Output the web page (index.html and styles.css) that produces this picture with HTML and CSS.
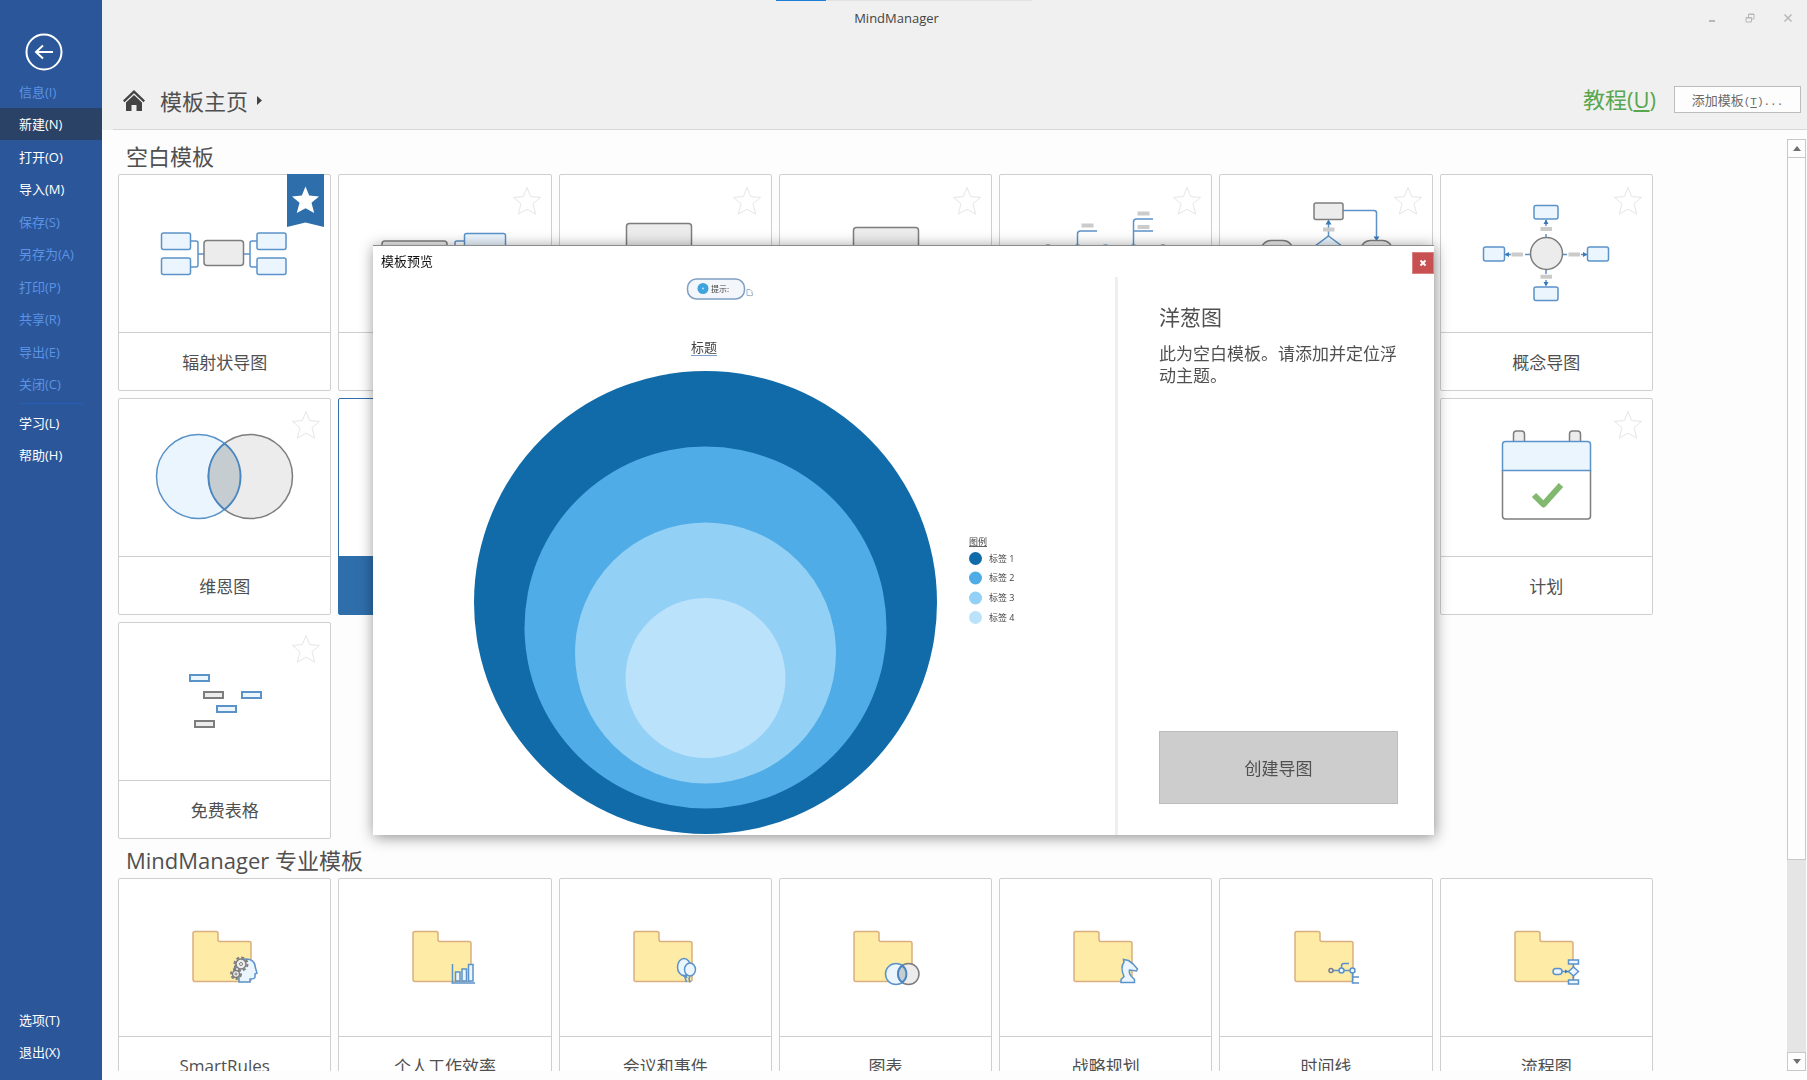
FILE: index.html
```html
<!DOCTYPE html>
<html lang="zh-CN">
<head>
<meta charset="utf-8">
<title>MindManager</title>
<link rel="stylesheet" href="styles.css">
</head>
<body>
<svg class="defs" aria-hidden="true">
  <symbol id="star" viewBox="0 0 30 30"><path d="M15 1.500l3.700 9.100 9.800.8-7.500 6.300 2.700 10.400-8.700-4.900-8.700 4.900 2.700-10.400-7.500-6.300 9.800-.8z"/></symbol>
  <symbol id="folder" viewBox="0 0 213 158"><path class="folder" d="M77 53.500h21q2 0 2 2v6q0 2 2 2h29q2 0 2 2v36q0 2-2 2H77q-2 0-2-2v-46q0-2 2-2z"/></symbol>
</svg>

<div class="app">
  <aside class="sidebar">
    <button class="back" aria-label="返回">
      <svg width="38" height="38" viewBox="0 0 38 38"><circle cx="19" cy="19" r="17.500"/><path d="M28 19H11M18 12.500L11 19l7 6.500"/></svg>
    </button>
    <nav class="menu menu-main">
      <a class="off" href="#">信息(I)</a>
      <a class="current" href="#">新建(N)</a>
      <a href="#">打开(O)</a>
      <a href="#">导入(M)</a>
      <a class="off" href="#">保存(S)</a>
      <a class="off" href="#">另存为(A)</a>
      <a class="off" href="#">打印(P)</a>
      <a class="off" href="#">共享(R)</a>
      <a class="off" href="#">导出(E)</a>
      <a class="off" href="#">关闭(C)</a>
    </nav>
    <hr class="rule">
    <nav class="menu menu-pair">
      <a href="#">学习(L)</a>
      <a href="#">帮助(H)</a>
    </nav>
    <nav class="menu menu-pair menu-end">
      <a href="#">选项(T)</a>
      <a href="#">退出(X)</a>
    </nav>
  </aside>

  <div class="main">
    <header class="header">
      <div class="progress-row"><div class="progress"><span class="progress-bar"></span></div></div>
      <div class="titlebar">
        <span class="app-name">MindManager</span>
        <div class="window-buttons">
          <button aria-label="最小化"><svg width="10" height="10" viewBox="0 0 10 10"><path d="M2 8h6" stroke-width="2"/></svg></button>
          <button aria-label="还原"><svg width="10" height="10" viewBox="0 0 10 10"><path d="M1 4.500h5.500v4.500H1zM1 5h5.500M3.500 4V1H9v5H7M3.500 1.500H9"/></svg></button>
          <button aria-label="关闭"><svg width="10" height="10" viewBox="0 0 10 10"><path d="M1.500 1.500l7 7M8.500 1.500l-7 7" stroke-width="1.500"/></svg></button>
        </div>
      </div>
      <div class="toolbar">
        <svg class="home" width="22" height="22" viewBox="0 0 22 22"><path d="M11 0l11 10.500-1.500 1.800L11 3.300l-9.500 9L0 10.500z"/><path d="M11 5l8 7.500V21h-5.500v-6h-5v6H3v-8.500z"/></svg>
        <a class="crumb" href="#">模板主页</a>
        <svg class="crumb-arrow" width="5" height="9" viewBox="0 0 5 9"><path d="M0 0l5 4.500L0 9z"/></svg>
        <div class="actions">
          <a class="tutorial" href="#">教程(<u>U</u>)</a>
          <button class="add-template">添加模板<span class="mono">(<u>T</u>)...</span></button>
        </div>
      </div>
    </header>

    <div class="content">
      <div class="gallery">
        <h2>空白模板</h2>
        <div class="grid">
          <article class="card">
            <div class="art"><svg width="213" height="158" viewBox="0 0 213 158">
              <path class="link" d="M73 67h5q2 0 2 2v22q0 2-2 2h-5M80 80h6M139 67h-5q-2 0-2 2v22q0 2 2 2h5M132 80h-7"/>
              <g class="b"><rect x="43.500" y="59" width="29" height="16.500" rx="2"/><rect x="43.500" y="84" width="29" height="16.500" rx="2"/><rect x="139" y="59" width="29" height="16.500" rx="2"/><rect x="139" y="84" width="29" height="16.500" rx="2"/></g>
              <rect class="g" x="86" y="66.500" width="39.500" height="25" rx="3"/></svg></div>
            <button class="fav pinned" aria-label="取消收藏"><svg width="37" height="53" viewBox="0 0 37 53"><path class="ribbon" d="M0 0h37v53l-18.500-4.500L0 53z"/><use href="#star" x="3.500" y="11" width="30" height="30"/></svg></button>
            <div class="label">辐射状导图</div>
          </article>
          <article class="card">
            <div class="art"><svg width="213" height="158" viewBox="0 0 213 158">
              <path class="link" d="M126 67h-7q-2 0-2 2v22q0 2 2 2h7M117 80h-8"/>
              <rect class="g" x="44" y="67" width="65" height="25" rx="3"/><rect class="b" x="126.500" y="59.500" width="41" height="17" rx="2"/></svg></div>
            <button class="fav" aria-label="收藏"><svg width="30" height="30"><use href="#star"/></svg></button>
            <div class="label"></div>
          </article>
          <article class="card">
            <div class="art"><svg width="213" height="158" viewBox="0 0 213 158"><rect class="g" x="67.500" y="49.500" width="65" height="26" rx="3"/></svg></div>
            <button class="fav" aria-label="收藏"><svg width="30" height="30"><use href="#star"/></svg></button>
            <div class="label"></div>
          </article>
          <article class="card">
            <div class="art"><svg width="213" height="158" viewBox="0 0 213 158"><rect class="g" x="74.500" y="53.500" width="65" height="26" rx="3"/></svg></div>
            <button class="fav" aria-label="收藏"><svg width="30" height="30"><use href="#star"/></svg></button>
            <div class="label"></div>
          </article>
          <article class="card">
            <div class="art"><svg width="213" height="158" viewBox="0 0 213 158">
              <path class="link" d="M78.500 72V60q0-3 3-3H98M134.500 72V48q0-3 3-3H154M134.500 57H154"/>
              <path class="tag" d="M82.500 51.500h12M138.500 39.500h12M138.500 53h12"/>
              <g class="b"><circle cx="78.500" cy="76" r="5"/><circle cx="106.500" cy="76" r="5"/><circle cx="134.500" cy="76" r="5"/></g><g class="g"><circle cx="49" cy="76" r="5"/><circle cx="164" cy="76" r="5"/></g></svg></div>
            <button class="fav" aria-label="收藏"><svg width="30" height="30"><use href="#star"/></svg></button>
            <div class="label"></div>
          </article>
          <article class="card">
            <div class="art"><svg width="213" height="158" viewBox="0 0 213 158">
              <path class="link" d="M123 36.500h31q2.500 0 2.500 2.500v24M108.500 63V49"/>
              <path class="tip" d="M105.500 50.500l3-5 3 5zM153.500 62.500l3 4.500 3-4.500z"/>
              <path class="tag" d="M103 55.500h11.500"/>
              <rect class="g" x="94" y="29" width="29" height="16.500" rx="2"/>
              <path class="b" d="M108.500 62l16 12-16 12-16-12z"/>
              <rect class="g" x="41" y="66.500" width="32" height="20" rx="10"/><rect class="g" x="140.500" y="66.500" width="32" height="20" rx="10"/></svg></div>
            <button class="fav" aria-label="收藏"><svg width="30" height="30"><use href="#star"/></svg></button>
            <div class="label"></div>
          </article>
          <article class="card">
            <div class="art"><svg width="213" height="158" viewBox="0 0 213 158">
              <path class="link" d="M106 64v-4M106 52v-6M106 96v4M106 106v5M90 80.500h-5M71 80.500h-6M122 80.500h5M141 80.500h6"/>
              <path class="tip" d="M103.500 50l2.500-4.500 2.500 4.500zM103.500 108l2.500 4.500 2.500-4.500zM69 78v5l-4.500-2.500zM143 78v5l4.500-2.500z"/>
              <path class="tag" d="M100.500 55h11.500M100.500 102.700h11.500M71.500 80.500H83M128.500 80.500H140"/>
              <g class="b"><rect x="94" y="31.500" width="24" height="13.500" rx="2"/><rect x="94" y="113" width="24" height="13.500" rx="2"/><rect x="43.500" y="73" width="21" height="14" rx="2"/><rect x="147.500" y="73" width="21" height="14" rx="2"/></g>
              <circle class="g" cx="106.500" cy="79.500" r="16"/></svg></div>
            <button class="fav" aria-label="收藏"><svg width="30" height="30"><use href="#star"/></svg></button>
            <div class="label">概念导图</div>
          </article>

          <article class="card">
            <div class="art"><svg width="213" height="158" viewBox="0 0 213 158">
              <circle class="b" cx="80.500" cy="78.500" r="42"/><circle class="g" cx="132.500" cy="78.500" r="42"/>
              <path class="overlap" d="M106.500 45.500a42 42 0 0 1 0 66a42 42 0 0 1 0-66z"/></svg></div>
            <button class="fav" aria-label="收藏"><svg width="30" height="30"><use href="#star"/></svg></button>
            <div class="label">维恩图</div>
          </article>
          <article class="card selected">
            <div class="art"></div>
            <div class="label">洋葱图</div>
          </article>
          <article class="card last-column">
            <div class="art"><svg width="213" height="158" viewBox="0 0 213 158">
              <path class="g" d="M73.500 43v-7q0-3 3-3h5q3 0 3 3v7M129.500 43v-7q0-3 3-3h5q3 0 3 3v7"/>
              <path class="page" d="M62.500 72v46q0 3 3 3h82q3 0 3-3V72"/>
              <path class="b" d="M62.500 72.500v-26q0-3 3-3h82q3 0 3 3v26z"/>
              <path class="check" d="M94 97l9.500 9.500L121 87"/></svg></div>
            <button class="fav" aria-label="收藏"><svg width="30" height="30"><use href="#star"/></svg></button>
            <div class="label">计划</div>
          </article>

          <article class="card">
            <div class="art"><svg width="213" height="158" viewBox="0 0 213 158">
              <g class="b bold"><rect x="72" y="53" width="19" height="6"/><rect x="124" y="70" width="19" height="6"/><rect x="99" y="84" width="19" height="6"/></g>
              <g class="g bold"><rect x="86" y="70" width="19" height="6"/><rect x="77" y="99" width="19" height="6"/></g></svg></div>
            <button class="fav" aria-label="收藏"><svg width="30" height="30"><use href="#star"/></svg></button>
            <div class="label">免费表格</div>
          </article>
        </div>

        <h2>MindManager 专业模板</h2>
        <div class="grid">
          <article class="card">
            <div class="art"><svg width="213" height="158" viewBox="0 0 213 158"><use href="#folder"/>
              <path class="b" d="M121 104v-6l-5-6q2-11 12-11 9 0 9.500 9l1.500 5-2 1v3q0 2-5 2v3z"/>
              <circle class="gear" cx="123" cy="86" r="6.500"/><circle class="g" cx="123" cy="86" r="5"/><circle class="hub" cx="123" cy="86" r="1.500"/>
              <circle class="gear" cx="118" cy="96" r="5"/><circle class="g" cx="118" cy="96" r="3.500"/><circle class="hub" cx="118" cy="96" r="1"/></svg></div>
            <div class="label">SmartRules</div>
          </article>
          <article class="card">
            <div class="art"><svg width="213" height="158" viewBox="0 0 213 158"><use href="#folder"/>
              <path class="link" d="M114.500 86v19M113.500 105H137"/>
              <g class="b"><rect x="117.500" y="94" width="4.500" height="9"/><rect x="124" y="91" width="4.500" height="12"/><rect x="130.500" y="86.500" width="4.500" height="16.500"/></g></svg></div>
            <div class="label">个人工作效率</div>
          </article>
          <article class="card">
            <div class="art"><svg width="213" height="158" viewBox="0 0 213 158"><use href="#folder"/>
              <ellipse class="b" cx="125" cy="89" rx="6.500" ry="8.500"/><ellipse class="b" cx="131" cy="91.500" rx="5.500" ry="6.500"/>
              <path class="link" d="M125.500 98l2 6M131 98.500l-1 2 1 4M124 98h3l1 2"/></svg></div>
            <div class="label">会议和事件</div>
          </article>
          <article class="card">
            <div class="art"><svg width="213" height="158" viewBox="0 0 213 158"><use href="#folder"/>
              <circle class="b" cx="117" cy="96" r="10.500"/><circle class="g" cx="129.500" cy="96" r="10.500"/>
              <path class="overlap" d="M123.200 87.600a10.500 10.500 0 0 1 0 16.800a10.500 10.500 0 0 1 0-16.800z"/></svg></div>
            <div class="label">图表</div>
          </article>
          <article class="card">
            <div class="art"><svg width="213" height="158" viewBox="0 0 213 158"><use href="#folder"/>
              <path class="b" d="M122 104.500v-3l3-3q-4-9 0-14.500l-.5-2.500 5 1q5 3 9 8.500l-1 2-7-1q-1 4 3 7.500l2 2v3z"/></svg></div>
            <div class="label">战略规划</div>
          </article>
          <article class="card">
            <div class="art"><svg width="213" height="158" viewBox="0 0 213 158"><use href="#folder"/>
              <path class="link" d="M111 92.500h21.500M121.500 92.500V88q0-2.500 2.500-2.500h5M132.500 92.500V105h6.500M132.500 99h6.500"/>
              <circle class="g" cx="111" cy="92.500" r="2"/><circle class="b" cx="121.500" cy="92.500" r="2.500"/><circle class="b" cx="132.500" cy="92.500" r="2.500"/></svg></div>
            <div class="label">时间线</div>
          </article>
          <article class="card">
            <div class="art"><svg width="213" height="158" viewBox="0 0 213 158"><use href="#folder"/>
              <path class="link" d="M122 93.500h7M133.500 86v16"/>
              <path class="tip" d="M125 91.500v4l3.500-2z"/>
              <g class="b"><rect x="113" y="90.500" width="9" height="6" rx="3"/><path d="M133.500 89l5 4.500-5 4.500-5-4.500z"/><rect x="128.500" y="82" width="10" height="4"/><rect x="128.500" y="102" width="10" height="4"/></g></svg></div>
            <div class="label">流程图</div>
          </article>
        </div>
      </div>

      <div class="scrollbar">
        <button aria-label="向上滚动"><svg width="8" height="5" viewBox="0 0 8 5"><path d="M0 5l4-5 4 5z"/></svg></button>
        <div class="track"><div class="thumb"></div></div>
        <button aria-label="向下滚动"><svg width="8" height="5" viewBox="0 0 8 5"><path d="M0 0l4 5 4-5z"/></svg></button>
      </div>
    </div>
  </div>
</div>

<div class="overlay">
  <section class="dialog" role="dialog" aria-labelledby="dialog-title">
    <header class="dialog-bar">
      <h1 id="dialog-title">模板预览</h1>
      <button class="dialog-close" aria-label="关闭"><svg width="8" height="8" viewBox="0 0 8 8"><path d="M1.500 1.500l5 5M6.500 1.500l-5 5"/></svg></button>
    </header>
    <div class="dialog-body">
      <svg class="preview" viewBox="373 277 742 557" preserveAspectRatio="xMidYMin meet">
        <rect class="hint-box" x="687.500" y="279" width="57" height="20" rx="9"/>
        <circle class="hint-dot" cx="703" cy="288.500" r="5.500"/><circle cx="703" cy="288.500" r="1" fill="#bbe2fb"/>
        <text class="small" x="711" y="292">提示:</text>
        <path class="note" d="M747 289.500h3l2 2v2M747 289.500v6h3M750 296l3-1-1-2"/>
        <text class="heading" x="691" y="352">标题</text>
        <path class="underline" d="M691 355.500h26"/>
        <circle cx="705.500" cy="602.500" r="231.500" fill="#106ba8"/>
        <circle cx="705.500" cy="627.500" r="181" fill="#50ace6"/>
        <circle cx="705.500" cy="653" r="130.500" fill="#92d0f5"/>
        <circle cx="705.500" cy="678" r="80" fill="#bbe2fb"/>
        <text class="legend" x="969" y="545">图例</text>
        <path class="legend-line" d="M969 546.500h18"/>
        <circle cx="975.500" cy="558.500" r="6.500" fill="#106ba8"/><text class="legend" x="989" y="562">标签 1</text>
        <circle cx="975.500" cy="578" r="6.500" fill="#50ace6"/><text class="legend" x="989" y="581">标签 2</text>
        <circle cx="975.500" cy="598" r="6.500" fill="#92d0f5"/><text class="legend" x="989" y="601">标签 3</text>
        <circle cx="975.500" cy="617.500" r="6.500" fill="#bbe2fb"/><text class="legend" x="989" y="621">标签 4</text>
      </svg>
      <div class="details">
        <h2>洋葱图</h2>
        <p>此为空白模板。请添加并定位浮动主题。</p>
        <button class="create">创建导图</button>
      </div>
    </div>
  </section>
</div>
</body>
</html>
```

FILE: styles.css
```css
* { box-sizing: border-box; }

body {
  margin: 0;
  font-family: "Open Sans", "Noto Sans CJK SC", sans-serif;
  color: #505050;
  background: #fdfdfd;
}

button {
  margin: 0;
  padding: 0;
  border: 0;
  background: none;
  font: inherit;
  color: inherit;
}

a { color: inherit; text-decoration: none; }
h1, h2, p { margin: 0; font-weight: 400; }
svg { display: block; }
.defs { position: absolute; width: 0; height: 0; }

.app {
  display: flex;
  height: 100vh;
  overflow: hidden;
}

/* Sidebar */
.sidebar {
  flex: none;
  display: flex;
  flex-direction: column;
  width: 102px;
  padding: 33px 0 12px;
  background: #2b579a;
  color: #fff;
}

.back { align-self: flex-start; margin: 0 0 4px 25px; }
.back svg { fill: none; stroke: #fff; stroke-width: 2; }

.menu {
  display: grid;
  grid-auto-rows: 1fr;
  font-size: 13px;
}
.menu-main { height: 325px; }
.menu-pair { height: 65px; }
.menu-end { margin-top: auto; }
.menu a { display: flex; align-items: center; padding-left: 19px; }
.menu .off { color: #5b93e6; }
.menu .current { background: #2a4265; }

.rule {
  width: 64px;
  height: 1px;
  margin: 3px 19px 2px;
  border: 0;
  background: #235fb5;
}

/* Header */
.main {
  flex: 1;
  display: flex;
  flex-direction: column;
  min-width: 0;
}

.header { background: #f0f0f0; }
.header::after {
  content: "";
  display: block;
  height: 1px;
  margin-left: 11px;
  background: #d8d8d8;
}

/* The title row is centred on the window, so it reaches back under the sidebar */
.progress-row, .titlebar { margin-left: -102px; }

.progress {
  width: 256px;
  height: 1px;
  margin: 0 auto;
  background: #e2e2e2;
}
.progress-bar { display: block; width: 50px; height: 1px; background: #1e7fd6; }

.titlebar {
  display: grid;
  grid-template-columns: 1fr auto 1fr;
  align-items: center;
  height: 34px;
  padding-right: 14px;
}
.app-name { grid-column: 2; font-size: 13px; color: #444; }
.window-buttons { display: flex; justify-content: flex-end; gap: 28px; }
.window-buttons svg { fill: none; stroke: #b8b8b8; }

.toolbar {
  display: flex;
  align-items: center;
  height: 94px;
  padding: 37px 6px 0 21px;
}
.home { fill: #444; }
.crumb { margin: 0 9px 0 15px; font-size: 22px; line-height: 28px; }
.crumb-arrow { fill: #444; }
.actions {
  display: flex;
  align-items: center;
  margin: 0 0 3px auto;
}
.tutorial { font-size: 22px; line-height: 28px; color: #58a64e; }
.tutorial u, .add-template u { text-underline-offset: 2px; }
.add-template {
  width: 127px;
  height: 27px;
  margin-left: 18px;
  border: 1px solid #bdbdbd;
  background: #fdfdfd;
  font-size: 13px;
  color: #6a6a6a;
}
.mono { font-family: "Liberation Mono", monospace; font-size: 11px; }

/* Template gallery */
.content {
  flex: 1;
  display: flex;
  min-height: 0;
  padding-bottom: 9px;
}

.gallery {
  flex: 1;
  min-width: 0;
  padding: 9px 134px 0 16px;
  overflow: hidden;
}
.gallery h2 {
  padding: 0 8px;
  font-size: 22px;
  line-height: 35px;
}
.grid + h2 { margin-top: 4px; }

.grid {
  display: grid;
  grid-template-columns: repeat(7, 1fr);
  gap: 7px;
}

.card {
  position: relative;
  border: 1px solid #cfcfcf;
  border-radius: 2px;
  background: #fff;
}
.last-column { grid-column: 7; }
.art {
  display: flex;
  justify-content: center;
  height: 157px;
  margin: 0 -1px;
}
.art svg { flex: none; margin-top: -1px; }
.label {
  display: flex;
  align-items: center;
  justify-content: center;
  height: 58px;
  border-top: 1px solid #cfcfcf;
  font-size: 17px;
}
.selected { border-color: #2e6eab; }
.selected .label { border-color: #2e6eab; background: #2e6eab; color: #fff; }

.fav {
  position: absolute;
  top: 11px;
  right: 9px;
  fill: #fff;
  stroke: #e6e6e6;
  stroke-width: 1;
}
.fav.pinned { top: -1px; right: 6px; stroke: none; }
.ribbon { fill: #2e6eab; }

/* Illustrations */
.link { fill: none; stroke: #5b93c9; stroke-width: 1.5; }
.b { fill: #ebf5fe; stroke: #5b93c9; stroke-width: 1.5; }
.g { fill: #ececec; stroke: #7d7d7d; stroke-width: 1.5; }
.bold { stroke-width: 2; }
.tip { fill: #3b7ab8; }
.tag { fill: none; stroke: #cbcbcb; stroke-width: 4; }
.overlap { fill: #c6cdd1; stroke: #4a87c0; stroke-width: 2; }
.page { fill: #fff; stroke: #7d7d7d; stroke-width: 1.5; }
.check { fill: none; stroke: #82b870; stroke-width: 6; stroke-linejoin: round; }
.folder { fill: #feeba5; stroke: #d9ae80; stroke-width: 1.5; }
.gear { fill: none; stroke: #808080; stroke-width: 2; stroke-dasharray: 3 2; }
.hub { fill: #fff; stroke: #7d7d7d; stroke-width: 1; }

/* Scrollbar */
.scrollbar {
  flex: none;
  display: flex;
  flex-direction: column;
  width: 19px;
  margin: 9px 1px 0 0;
}
.scrollbar button {
  display: grid;
  place-items: center;
  height: 19px;
  border: 1px solid #c8c8c8;
  background: #fdfdfd;
  fill: #707070;
}
.track { flex: 1; background: #e5e5e5; }
.thumb {
  height: 78.5%;
  border: 1px solid #c8c8c8;
  border-top: 0;
  background: #fdfdfd;
}

/* Preview dialog */
.overlay {
  position: fixed;
  inset: 0;
  display: grid;
  place-items: center;
}
.dialog {
  display: flex;
  flex-direction: column;
  width: 1061px;
  max-width: 100%;
  height: 590px;
  border-top: 1px solid #8c8c8c;
  background: #fff;
  box-shadow: 1px 2px 14px rgba(0, 0, 0, 0.45);
}
.dialog-bar {
  display: flex;
  align-items: flex-end;
  justify-content: space-between;
  height: 31px;
  padding: 0 0 3px 8px;
}
.dialog-bar h1 { font-size: 13px; line-height: 26px; color: #111; }
.dialog-close {
  display: grid;
  place-items: center;
  width: 22px;
  height: 22px;
  background: #c75050;
  border: 1px solid #d98080;
}
.dialog-close svg { stroke: #fff; stroke-width: 2; }

.dialog-body { flex: 1; display: flex; min-height: 0; }
.preview { flex: 1; min-width: 0; height: 100%; }
.details {
  flex: none;
  display: flex;
  flex-direction: column;
  width: 319px;
  padding: 26px 36px 31px 41px;
  border-left: 3px solid #eee;
}
.details h2 { font-size: 21px; line-height: 28px; }
.details p { margin-top: 12px; font-size: 17px; line-height: 22px; }
.create {
  height: 73px;
  margin-top: auto;
  border: 1px solid #bcbcbc;
  background: #cdcdcd;
  font-size: 17px;
}

.preview text { fill: #444; }
.hint-box { fill: #f3f6fa; stroke: #7f9fc4; stroke-width: 1.5; }
.hint-dot { fill: #3fa4de; }
.small { font-size: 8px; }
.heading { font-size: 13px; }
.legend { font-size: 9px; }
.note { fill: none; stroke: #9fb4c8; }
.underline { stroke: #7f9fc4; }
.legend-line { stroke: #666; }
```
